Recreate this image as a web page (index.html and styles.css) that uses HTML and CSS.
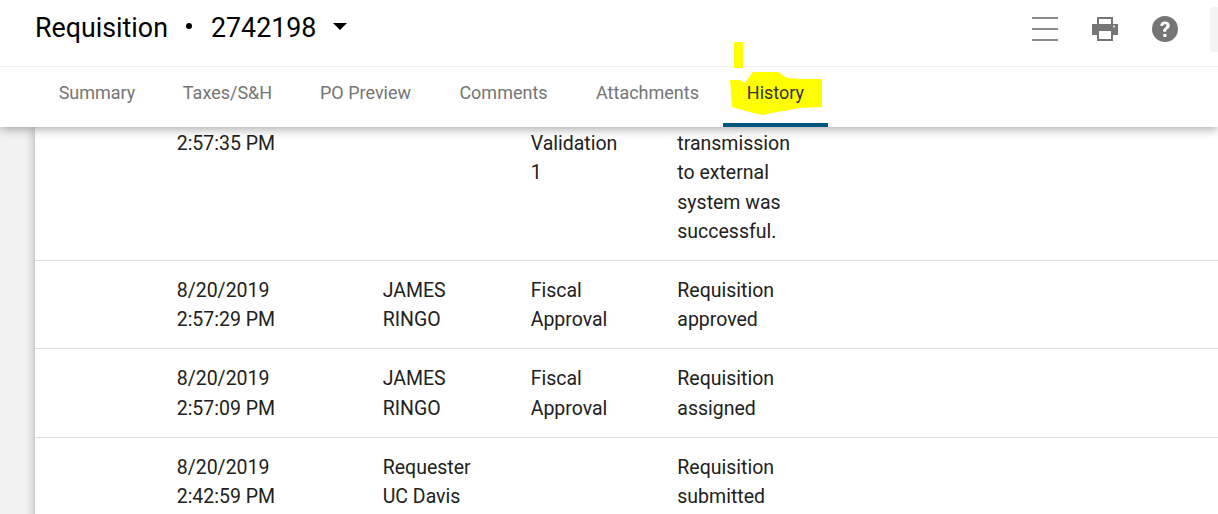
FILE: index.html
```html
<!DOCTYPE html>
<html lang="en">
<head>
    <meta charset="UTF-8">
    <title>Requisition 2742198 - History</title>
    <link rel="stylesheet" href="styles.css">
</head>
<body>
    <header class="top-bar">
        <div class="title-row">
            <h1 class="doc-title">
                <span>Requisition</span>
                <span class="dot"></span>
                <span>2742198</span>
                <span class="caret"></span>
            </h1>
            <div class="tools">
                <div class="menu-icon"><span></span><span></span><span></span></div>
                <svg class="tool-icon" viewBox="0 0 26 26">
                    <path fill="#757575" d="M5 1h16v7h5v11h-5v6H5v-6H0V8h5zM7 3v5h12V3zM7 15v8h12v-8zM22 9.500a1 1 0 1 0 0 2 1 1 0 0 0 0-2z" fill-rule="evenodd"/>
                </svg>
                <svg class="tool-icon" viewBox="0 0 26 26">
                    <path fill="#757575" fill-rule="evenodd" d="M13 0a13 13 0 1 1 0 26 13 13 0 0 1 0-26zM11.300 18v3h3.200v-3zM13 5.500c-2.800 0-4.600 1.600-4.800 4.200l2.900.4c.2-1.300.8-1.900 1.800-1.900s1.600.5 1.600 1.400c0 .7-.4 1.100-1.300 1.800-1.500 1.100-2 2-2 3.700v.6h3v-.4c0-1 .3-1.400 1.300-2.100 1.400-1 2.200-2 2.200-3.800 0-2.400-1.900-3.900-4.700-3.900z"/>
                </svg>
            </div>
            <div class="edge-tab"></div>
        </div>
        <nav class="tabs">
            <a class="tab">Summary</a>
            <a class="tab">Taxes/S&amp;H</a>
            <a class="tab">PO Preview</a>
            <a class="tab">Comments</a>
            <a class="tab">Attachments</a>
            <a class="tab active">
                <svg class="marker" viewBox="0 0 105 90">
                    <rect x="11" y="0" width="9" height="26"/>
                    <path d="M7 38h10l5 3 4-6 4-5h25l9 6 16 1h19v28l-22 1-23 4-14 3-10-2-21-6z"/>
                </svg>
                <span class="tab-label">History</span>
            </a>
        </nav>
    </header>

    <main class="page">
        <section class="history">
            <div class="row first">
                <div>2:57:35 PM</div>
                <div></div>
                <div class="stage">Validation 1</div>
                <div>transmission to external system was successful.</div>
            </div>
            <div class="row">
                <div>8/20/2019<br>2:57:29 PM</div>
                <div>JAMES<br>RINGO</div>
                <div class="stage">Fiscal Approval</div>
                <div>Requisition approved</div>
            </div>
            <div class="row">
                <div>8/20/2019<br>2:57:09 PM</div>
                <div>JAMES<br>RINGO</div>
                <div class="stage">Fiscal Approval</div>
                <div>Requisition assigned</div>
            </div>
            <div class="row">
                <div>8/20/2019<br>2:42:59 PM</div>
                <div>Requester<br>UC Davis</div>
                <div class="stage"></div>
                <div>Requisition submitted</div>
            </div>
        </section>
    </main>
</body>
</html>
```

FILE: styles.css
```css
html, body {
    height: 100%;
}

body {
    margin: 0;
    overflow: hidden;
    background-color: #f2f2f2;
    color: #212121;
    font-family: Roboto, sans-serif;
}

.top-bar {
    position: relative;
    z-index: 2;
    background-color: white;
    box-shadow: 0 2px 10px rgba(0, 0, 0, 0.35);
}

.title-row {
    display: flex;
    align-items: center;
    justify-content: space-between;
    height: 66px;
    padding-left: 35px;
    border-bottom: 1px solid #eeeeee;
}

.doc-title {
    display: flex;
    align-items: center;
    margin: 0 0 10px;
    color: black;
    font-size: 26.800px;
    font-weight: 400;
}

.dot {
    width: 6px;
    height: 6px;
    margin: 0 19px 4px 18px;
    border-radius: 50%;
    background-color: black;
}

.caret {
    width: 0;
    height: 0;
    margin: 0 0 4px 17px;
    border-top: 7px solid black;
    border-left: 7px solid transparent;
    border-right: 7px solid transparent;
}

.tools {
    display: flex;
    align-items: center;
    gap: 34px;
    margin-left: auto;
    margin-right: 32px;
    margin-bottom: 8px;
}

.menu-icon {
    display: flex;
    flex-direction: column;
    gap: 9px;
    width: 26px;
}

.menu-icon span {
    height: 2px;
    background-color: #8a8a8a;
}

.tool-icon {
    width: 26px;
    height: 26px;
}

.edge-tab {
    width: 8px;
    height: 45px;
    margin-bottom: 7px;
    border-radius: 4px 0 0 4px;
    background-color: #f4f4f4;
}

.tabs {
    display: grid;
    grid-template-columns: 124px 137px 139px 137px 151px 105px;
    height: 60px;
    padding-left: 35px;
}

.tab {
    position: relative;
    padding-top: 15px;
    color: #757575;
    font-size: 18px;
    line-height: 22px;
    text-align: center;
}

.tab.active {
    color: #333333;
    border-bottom: 4px solid #00567f;
    height: 41px;
}

.marker {
    position: absolute;
    left: 0;
    top: -25px;
    width: 105px;
    height: 90px;
    fill: #ffff00;
}

.tab-label {
    position: relative;
}

.page {
    margin-left: 35px;
    background-color: white;
    box-shadow: 0 0 10px rgba(0, 0, 0, 0.3);
    height: 400px;
}

.row {
    display: grid;
    grid-template-columns: 206px 148px 146.600px 125px;
    padding: 15px 0 13.700px 141.700px;
    border-bottom: 1px solid #dddddd;
    font-size: 19.500px;
    line-height: 29.300px;
}

.stage {
    padding-right: 47px;
}

.row.first {
    padding-top: 2px;
    padding-bottom: 14px;
}
```
